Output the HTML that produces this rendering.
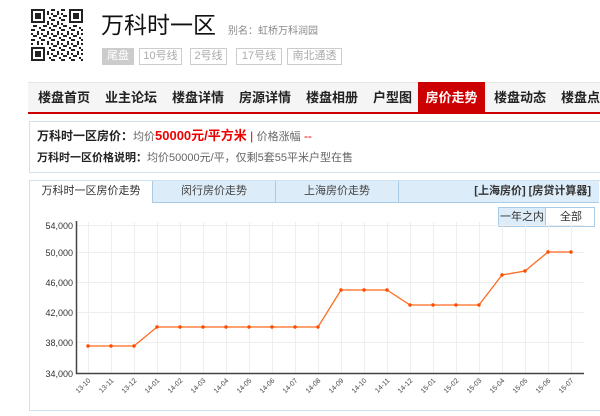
<!DOCTYPE html>
<html><head><meta charset="utf-8"><style>
*{margin:0;padding:0;box-sizing:border-box}
body{width:600px;height:416px;overflow:hidden;background:#fff;font-family:"Liberation Sans","Noto Sans CJK SC",sans-serif;position:relative;color:#333}
.a{position:absolute;white-space:nowrap}
.tag{position:absolute;top:48px;height:17px;border:1px solid #ccc;color:#aaa;font-size:11px;line-height:15px;text-align:center}
.nav{position:absolute;left:28px;top:82px;width:580px;height:32px;background:#f5f5f5;border-top:1px solid #e5e5e5;border-bottom:2px solid #c00}
.nav span{position:absolute;top:0;font-size:13px;font-weight:bold;color:#222;line-height:30px;white-space:nowrap}
.tab{position:absolute;top:181px;height:22px;background:#dcecf8;border-right:1px solid #a9cbe6;border-bottom:1px solid #a9cbe6;font-size:11px;color:#444;line-height:21px;text-align:center}
</style></head><body>
<svg class="a" style="left:31px;top:9px" width="52" height="52" viewBox="0 0 26 26">
<defs><pattern id="p" width="5" height="5" patternUnits="userSpaceOnUse"><rect x="0" y="0" width="2" height="1" fill="#222"/><rect x="3" y="1" width="1" height="2" fill="#222"/><rect x="1" y="3" width="2" height="1" fill="#222"/><rect x="4" y="4" width="1" height="1" fill="#222"/><rect x="0" y="2" width="1" height="1" fill="#222"/></pattern></defs>
<rect width="26" height="26" fill="url(#p)"/>
<g fill="#fff"><rect width="8" height="8"/><rect x="18" width="8" height="8"/><rect y="18" width="8" height="8"/></g>
<g fill="none" stroke="#222"><rect x=".5" y=".5" width="6" height="6"/><rect x="19.5" y=".5" width="6" height="6"/><rect x=".5" y="19.5" width="6" height="6"/></g>
<g fill="#222"><rect x="2" y="2" width="3" height="3"/><rect x="21" y="2" width="3" height="3"/><rect x="2" y="21" width="3" height="3"/></g>
</svg>
<div class="a" style="left:101px;top:10px;font-size:23px;color:#111;line-height:30px">万科时一区</div>
<div class="a" style="left:228px;top:22px;font-size:10px;color:#888">别名：虹桥万科润园</div>
<div class="tag" style="left:102px;width:32px;background:#ccc;color:#fff;border-color:#ccc">尾盘</div>
<div class="tag" style="left:139px;width:43px">10号线</div>
<div class="tag" style="left:190px;width:37px">2号线</div>
<div class="tag" style="left:236px;width:46px">17号线</div>
<div class="tag" style="left:287px;width:55px">南北通透</div>
<div class="nav">
<span style="left:10px">楼盘首页</span><span style="left:77px">业主论坛</span><span style="left:144px">楼盘详情</span><span style="left:211px">房源详情</span><span style="left:278px">楼盘相册</span><span style="left:345px">户型图</span>
<span style="left:390px;top:-1px;width:67px;height:31px;background:#c00;color:#fff;text-align:center;line-height:31px">房价走势</span>
<span style="left:466px">楼盘动态</span><span style="left:533px">楼盘点评</span>
</div>
<div class="a" style="left:29px;top:121px;width:580px;height:52px;border:1px solid #cfe2f1"></div>
<div class="a" style="left:37px;top:128px;font-size:12px;line-height:16px"><b style="color:#222">万科时一区房价：</b><span style="font-size:11px;color:#666">均价</span><b style="color:#e00;font-size:13px">50000元/平方米</b> <span style="color:#c00">|</span> <span style="font-size:11px;color:#666">价格涨幅</span> <span style="color:#e00">--</span></div>
<div class="a" style="left:37px;top:151px;font-size:11px;line-height:14px;color:#666"><b style="color:#222">万科时一区价格说明：</b>均价50000元/平，仅剩5套55平米户型在售</div>
<div class="a" style="left:29px;top:180px;width:580px;height:231px;border:1px solid #cfe2f1"></div>
<div class="tab" style="left:30px;width:123px;background:#fff;border-bottom:none;color:#333">万科时一区房价走势</div>
<div class="tab" style="left:153px;width:123px">闵行房价走势</div>
<div class="tab" style="left:276px;width:123px">上海房价走势</div>
<div class="tab" style="left:399px;width:200px;border-right:none;text-align:right;padding-right:8px;font-weight:bold;color:#333">[上海房价] [房贷计算器]</div>
<div class="a" style="left:498px;top:207px;width:97px;height:20px;border:1px solid #a9cbe6;font-size:11px;line-height:18px">
<span class="a" style="left:0;width:47px;height:18px;background:#dcecf8;border-right:1px solid #a9cbe6;text-align:center">一年之内</span><span class="a" style="left:48px;width:48px;text-align:center">全部</span></div>
<svg class="a" style="left:0;top:215px" width="600" height="200" viewBox="0 215 600 200" font-family="Liberation Sans,sans-serif">
<g stroke="#eee" stroke-width="1">
<path d="M77 225.5H584M77 252.5H584M77 282.5H584M77 312.5H584M77 342.5H584"/>
<path d="M88.5 222V373M111.5 222V373M134.5 222V373M157.5 222V373M180.5 222V373M203.5 222V373M226.5 222V373M249.5 222V373M272.5 222V373M295.5 222V373M318.5 222V373M341.5 222V373M364.5 222V373M387.5 222V373M410.5 222V373M433.5 222V373M456.5 222V373M479.5 222V373M502.5 222V373M525.5 222V373M548.5 222V373M571.5 222V373"/>
</g>
<path d="M76.5 221V373.5H584" fill="none" stroke="#444" stroke-width="1.5"/>
<g font-size="9" fill="#333" text-anchor="end">
<text x="73" y="229">54,000</text><text x="73" y="256">50,000</text><text x="73" y="286">46,000</text><text x="73" y="316">42,000</text><text x="73" y="346">38,000</text><text x="73" y="377">34,000</text>
</g>
<g font-size="7" fill="#444" text-anchor="end">
<text transform="translate(91 381) rotate(-45)">13-10</text><text transform="translate(114 381) rotate(-45)">13-11</text><text transform="translate(137 381) rotate(-45)">13-12</text><text transform="translate(160 381) rotate(-45)">14-01</text><text transform="translate(183 381) rotate(-45)">14-02</text><text transform="translate(206 381) rotate(-45)">14-03</text><text transform="translate(229 381) rotate(-45)">14-04</text><text transform="translate(252 381) rotate(-45)">14-05</text><text transform="translate(275 381) rotate(-45)">14-06</text><text transform="translate(298 381) rotate(-45)">14-07</text><text transform="translate(321 381) rotate(-45)">14-08</text><text transform="translate(344 381) rotate(-45)">14-09</text><text transform="translate(367 381) rotate(-45)">14-10</text><text transform="translate(390 381) rotate(-45)">14-11</text><text transform="translate(413 381) rotate(-45)">14-12</text><text transform="translate(436 381) rotate(-45)">15-01</text><text transform="translate(459 381) rotate(-45)">15-02</text><text transform="translate(482 381) rotate(-45)">15-03</text><text transform="translate(505 381) rotate(-45)">15-04</text><text transform="translate(528 381) rotate(-45)">15-05</text><text transform="translate(551 381) rotate(-45)">15-06</text><text transform="translate(574 381) rotate(-45)">15-07</text>
</g>
<polyline fill="none" stroke="#ff6a1f" stroke-width="1.3" points="88,346 111,346 134,346 157,327 180,327 203,327 226,327 249,327 272,327 295,327 318,327 341,290 364,290 387,290 410,305 433,305 456,305 479,305 502,275 525,271 548,252 571,252"/>
<g fill="#ff4a00">
<circle cx="88" cy="346" r="1.7"/><circle cx="111" cy="346" r="1.7"/><circle cx="134" cy="346" r="1.7"/><circle cx="157" cy="327" r="1.7"/><circle cx="180" cy="327" r="1.7"/><circle cx="203" cy="327" r="1.7"/><circle cx="226" cy="327" r="1.7"/><circle cx="249" cy="327" r="1.7"/><circle cx="272" cy="327" r="1.7"/><circle cx="295" cy="327" r="1.7"/><circle cx="318" cy="327" r="1.7"/><circle cx="341" cy="290" r="1.7"/><circle cx="364" cy="290" r="1.7"/><circle cx="387" cy="290" r="1.7"/><circle cx="410" cy="305" r="1.7"/><circle cx="433" cy="305" r="1.7"/><circle cx="456" cy="305" r="1.7"/><circle cx="479" cy="305" r="1.7"/><circle cx="502" cy="275" r="1.7"/><circle cx="525" cy="271" r="1.7"/><circle cx="548" cy="252" r="1.7"/><circle cx="571" cy="252" r="1.7"/>
</g>
</svg>
</body></html>
